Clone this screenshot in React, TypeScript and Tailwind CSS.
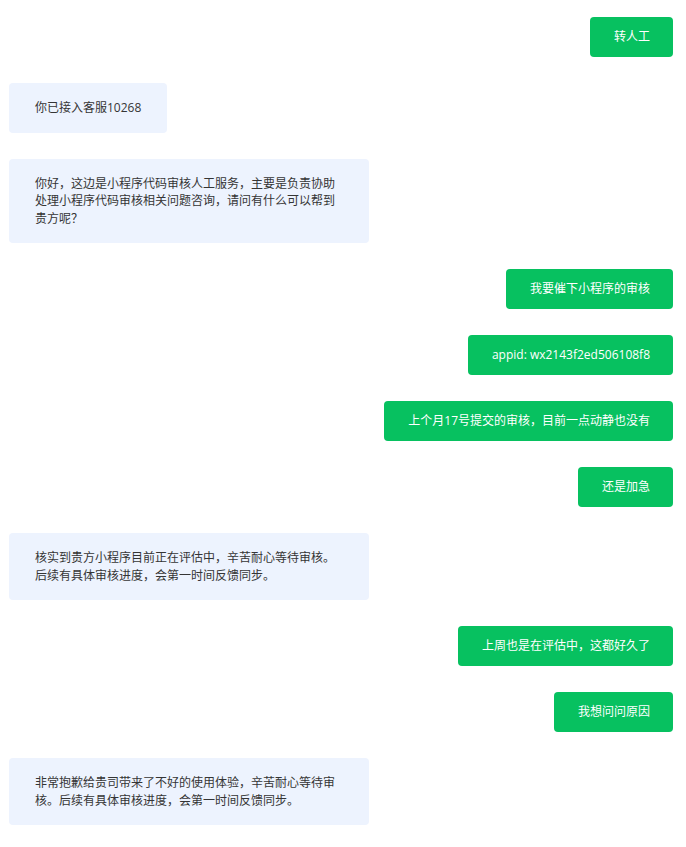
import React from 'react';

type Msg = { from: 'me' | 'agent'; text: string };

const messages: Msg[] = [
  { from: 'me', text: '转人工' },
  { from: 'agent', text: '你已接入客服10268' },
  {
    from: 'agent',
    text: '你好，这边是小程序代码审核人工服务，主要是负责协助处理小程序代码审核相关问题咨询，请问有什么可以帮到贵方呢？',
  },
  { from: 'me', text: '我要催下小程序的审核' },
  { from: 'me', text: 'appid: wx2143f2ed506108f8' },
  { from: 'me', text: '上个月17号提交的审核，目前一点动静也没有' },
  { from: 'me', text: '还是加急' },
  {
    from: 'agent',
    text: '核实到贵方小程序目前正在评估中，辛苦耐心等待审核。后续有具体审核进度，会第一时间反馈同步。',
  },
  { from: 'me', text: '上周也是在评估中，这都好久了' },
  { from: 'me', text: '我想问问原因' },
  {
    from: 'agent',
    text: '非常抱歉给贵司带来了不好的使用体验，辛苦耐心等待审核。后续有具体审核进度，会第一时间反馈同步。',
  },
];

export default function App() {
  return (
    <div className="min-h-screen bg-white font-['Open_Sans','Noto_Sans_CJK_SC',sans-serif] text-[12px]">
      <div className="flex flex-col gap-[26px] pt-[17px] pb-[20px] pl-[9px] pr-[13px]">
        {messages.map((m, i) =>
          m.from === 'me' ? (
            <div
              key={i}
              className="self-end rounded-[4px] bg-[#07c160] pl-[24px] pr-[23px] py-[11px] leading-[18px] text-white"
            >
              {m.text}
            </div>
          ) : (
            <div
              key={i}
              className="self-start max-w-[360px] rounded-[4px] bg-[#edf3fe] px-[26px] py-[16px] leading-[17.5px] text-[#353535]"
            >
              {m.text}
            </div>
          )
        )}
      </div>
    </div>
  );
}
